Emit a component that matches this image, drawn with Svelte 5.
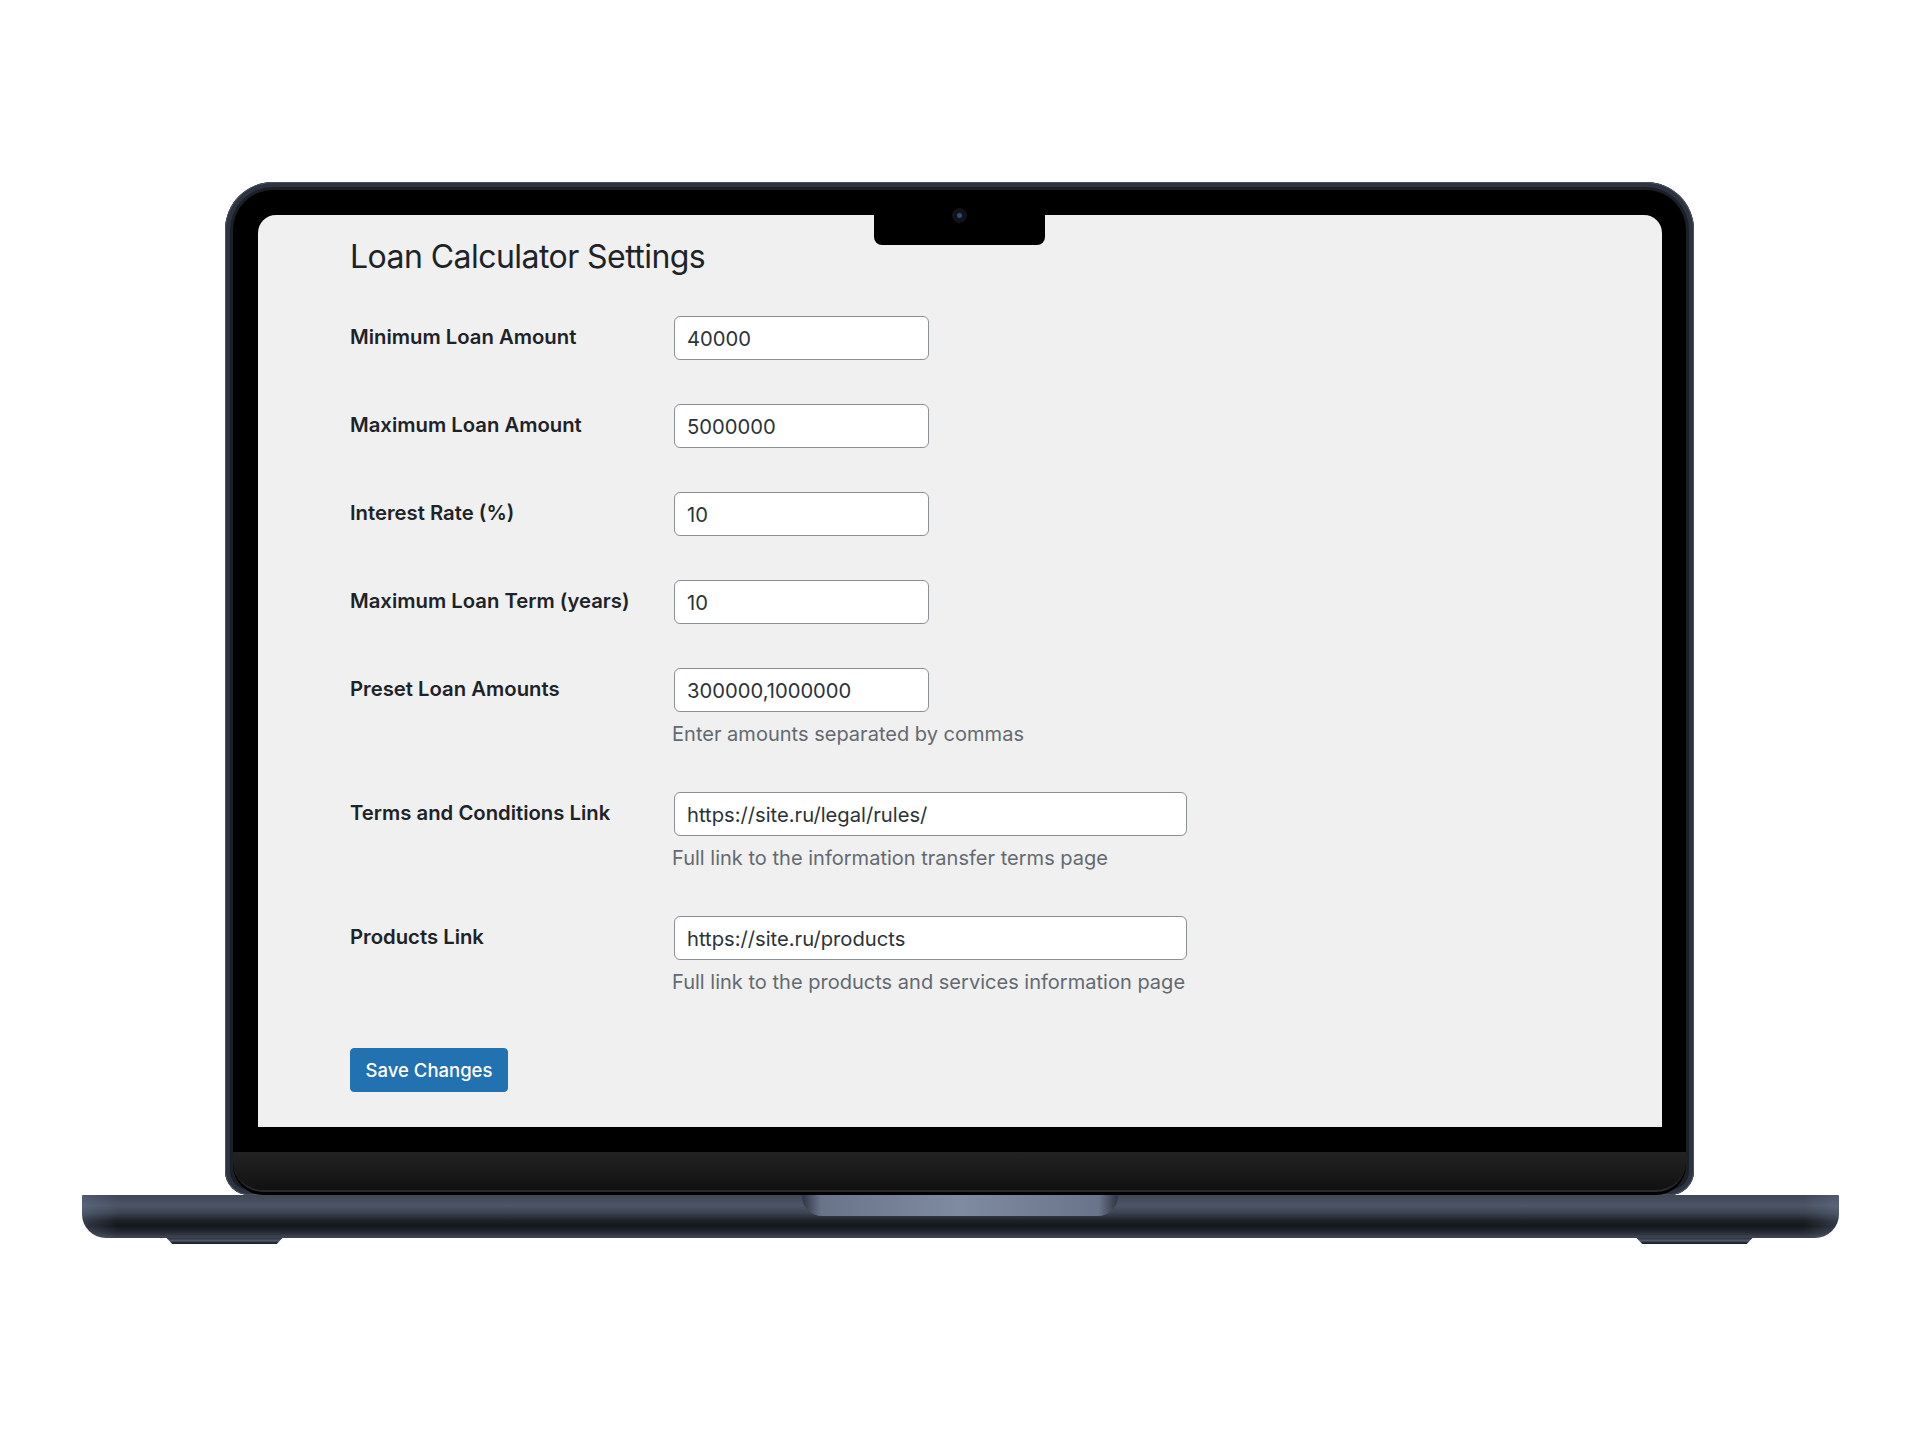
<script>
// settings rows shown on the laptop screen
const fields = [
    { label: 'Minimum Loan Amount', value: '40000' },
    { label: 'Maximum Loan Amount', value: '5000000' },
    { label: 'Interest Rate (%)', value: '10' },
    { label: 'Maximum Loan Term (years)', value: '10' },
    { label: 'Preset Loan Amounts', value: '300000,1000000', hint: 'Enter amounts separated by commas' },
    { label: 'Terms and Conditions Link', value: 'https://site.ru/legal/rules/', hint: 'Full link to the information transfer terms page', wide: true },
    { label: 'Products Link', value: 'https://site.ru/products', hint: 'Full link to the products and services information page', wide: true }
];
</script>

<div class="stage">
    <div class="lid">
        <div class="bezel">
            <div class="screen">
                <div class="notch"><span class="camera"></span></div>
                <h1>Loan Calculator Settings</h1>
                <form class="settings" on:submit|preventDefault>
                    {#each fields as field}
                        <div class="row">
                            <label for={field.label}>{field.label}</label>
                            <div class="control">
                                <input id={field.label} type="text" class:wide={field.wide} value={field.value} />
                                {#if field.hint}
                                    <p class="hint">{field.hint}</p>
                                {/if}
                            </div>
                        </div>
                    {/each}
                    <button type="submit">Save Changes</button>
                </form>
            </div>
            <div class="chin"></div>
        </div>
    </div>
    <div class="base">
        <div class="hinge"></div>
        <span class="foot left"></span>
        <span class="foot right"></span>
    </div>
</div>

<style>
    :global(body) {
        margin: 0;
        background: #ffffff;
    }

    .stage {
        width: 1920px;
        height: 1440px;
        padding-top: 182px;
        box-sizing: border-box;
        font-family: Inter, "Liberation Sans", sans-serif;
        overflow: hidden;
    }

    .lid {
        width: 1469px;
        height: 1013px;
        margin-left: 225px;
        box-sizing: border-box;
        padding: 8px 8px 0;
        border-radius: 48px 48px 24px 24px;
        background: #1c1f24;
        box-shadow: inset 0 0 0 1px #4a5260, inset 0 0 0 5px #2c3441;
    }

    .bezel {
        height: 1005px;
        box-sizing: border-box;
        padding: 25px 24px 0 25px;
        border-radius: 40px 40px 30px 30px;
        background: #000000;
        overflow: hidden;
    }

    .screen {
        position: relative;
        height: 912px;
        box-sizing: border-box;
        padding: 19px 0 0 92px;
        border-radius: 18px 18px 0 0;
        background: #f0f0f1;
        color: #1d2327;
    }

    .notch {
        position: absolute;
        top: 0;
        left: 616px;
        width: 171px;
        height: 30px;
        border-radius: 0 0 8px 8px;
        background: #000000;
    }

    .camera {
        position: absolute;
        top: -7px;
        left: 78px;
        width: 15px;
        height: 15px;
        border-radius: 50%;
        background: radial-gradient(circle, #2f4a80 0 2px, #12131a 3px 7px, #0a0a0d 8px);
    }

    h1 {
        margin: 0 0 36px;
        font-size: 32px;
        font-weight: 400;
        line-height: 46px;
        letter-spacing: -0.55px;
    }

    .settings {
        display: flex;
        flex-direction: column;
        align-items: flex-start;
        gap: 44px;
    }

    .row {
        display: flex;
        align-items: flex-start;
    }

    label {
        width: 324px;
        font-size: 20.3px;
        font-weight: 600;
        line-height: 42px;
    }

    .control {
        display: flex;
        flex-direction: column;
    }

    input {
        width: 255px;
        height: 44px;
        box-sizing: border-box;
        padding: 0 12px;
        border: 1.5px solid #8c8f94;
        border-radius: 6px;
        background: #ffffff;
        color: #2c3338;
        font-family: inherit;
        font-size: 20.2px;
    }

    input.wide {
        width: 513px;
    }

    .hint {
        margin: 7.5px 0 0 -2px;
        font-size: 20.05px;
        line-height: 28.5px;
        color: #646970;
    }

    button {
        width: 158px;
        height: 44px;
        margin-top: 8px;
        padding: 0;
        border: 1px solid #2271b1;
        border-radius: 4px;
        background: #2271b1;
        color: #ffffff;
        font-family: inherit;
        font-size: 18.5px;
        font-weight: 500;
    }

    .chin {
        height: 38px;
        margin: 25px -24px 0 -25px;
        border-bottom: 2px solid #2a2a2a;
        border-radius: 0 0 30px 30px;
        background: linear-gradient(#232323, #101110);
    }

    .base {
        position: relative;
        width: 1757px;
        height: 43px;
        margin-left: 81.5px;
        border-radius: 1px 1px 24px 24px;
        background:
            linear-gradient(90deg, rgba(120, 135, 165, 0.3), transparent 2%, transparent 98%, rgba(120, 135, 165, 0.3)),
            linear-gradient(#3f4655, #4d5667 25%, #3c4352 42%, #1c1f26 60%, #14171c 72%, #282d36 88%, #3c4250 97%);
    }

    .hinge {
        position: absolute;
        top: 0;
        left: 720px;
        width: 316px;
        height: 21px;
        border-radius: 0 0 20px 20px;
        background: linear-gradient(90deg, #2e3542, #69748a 6%, #7f8ba1 50%, #69748a 94%, #2e3542);
    }

    .foot {
        position: absolute;
        top: 100%;
        width: 116px;
        height: 6px;
        clip-path: polygon(0 0, 100% 0, 95% 100%, 5% 100%);
        background: linear-gradient(#2a303c, #515a6b 45%, #262a32 75%, #1b1d22);
    }

    .foot.left {
        left: 85px;
    }

    .foot.right {
        left: 1555px;
    }
</style>
